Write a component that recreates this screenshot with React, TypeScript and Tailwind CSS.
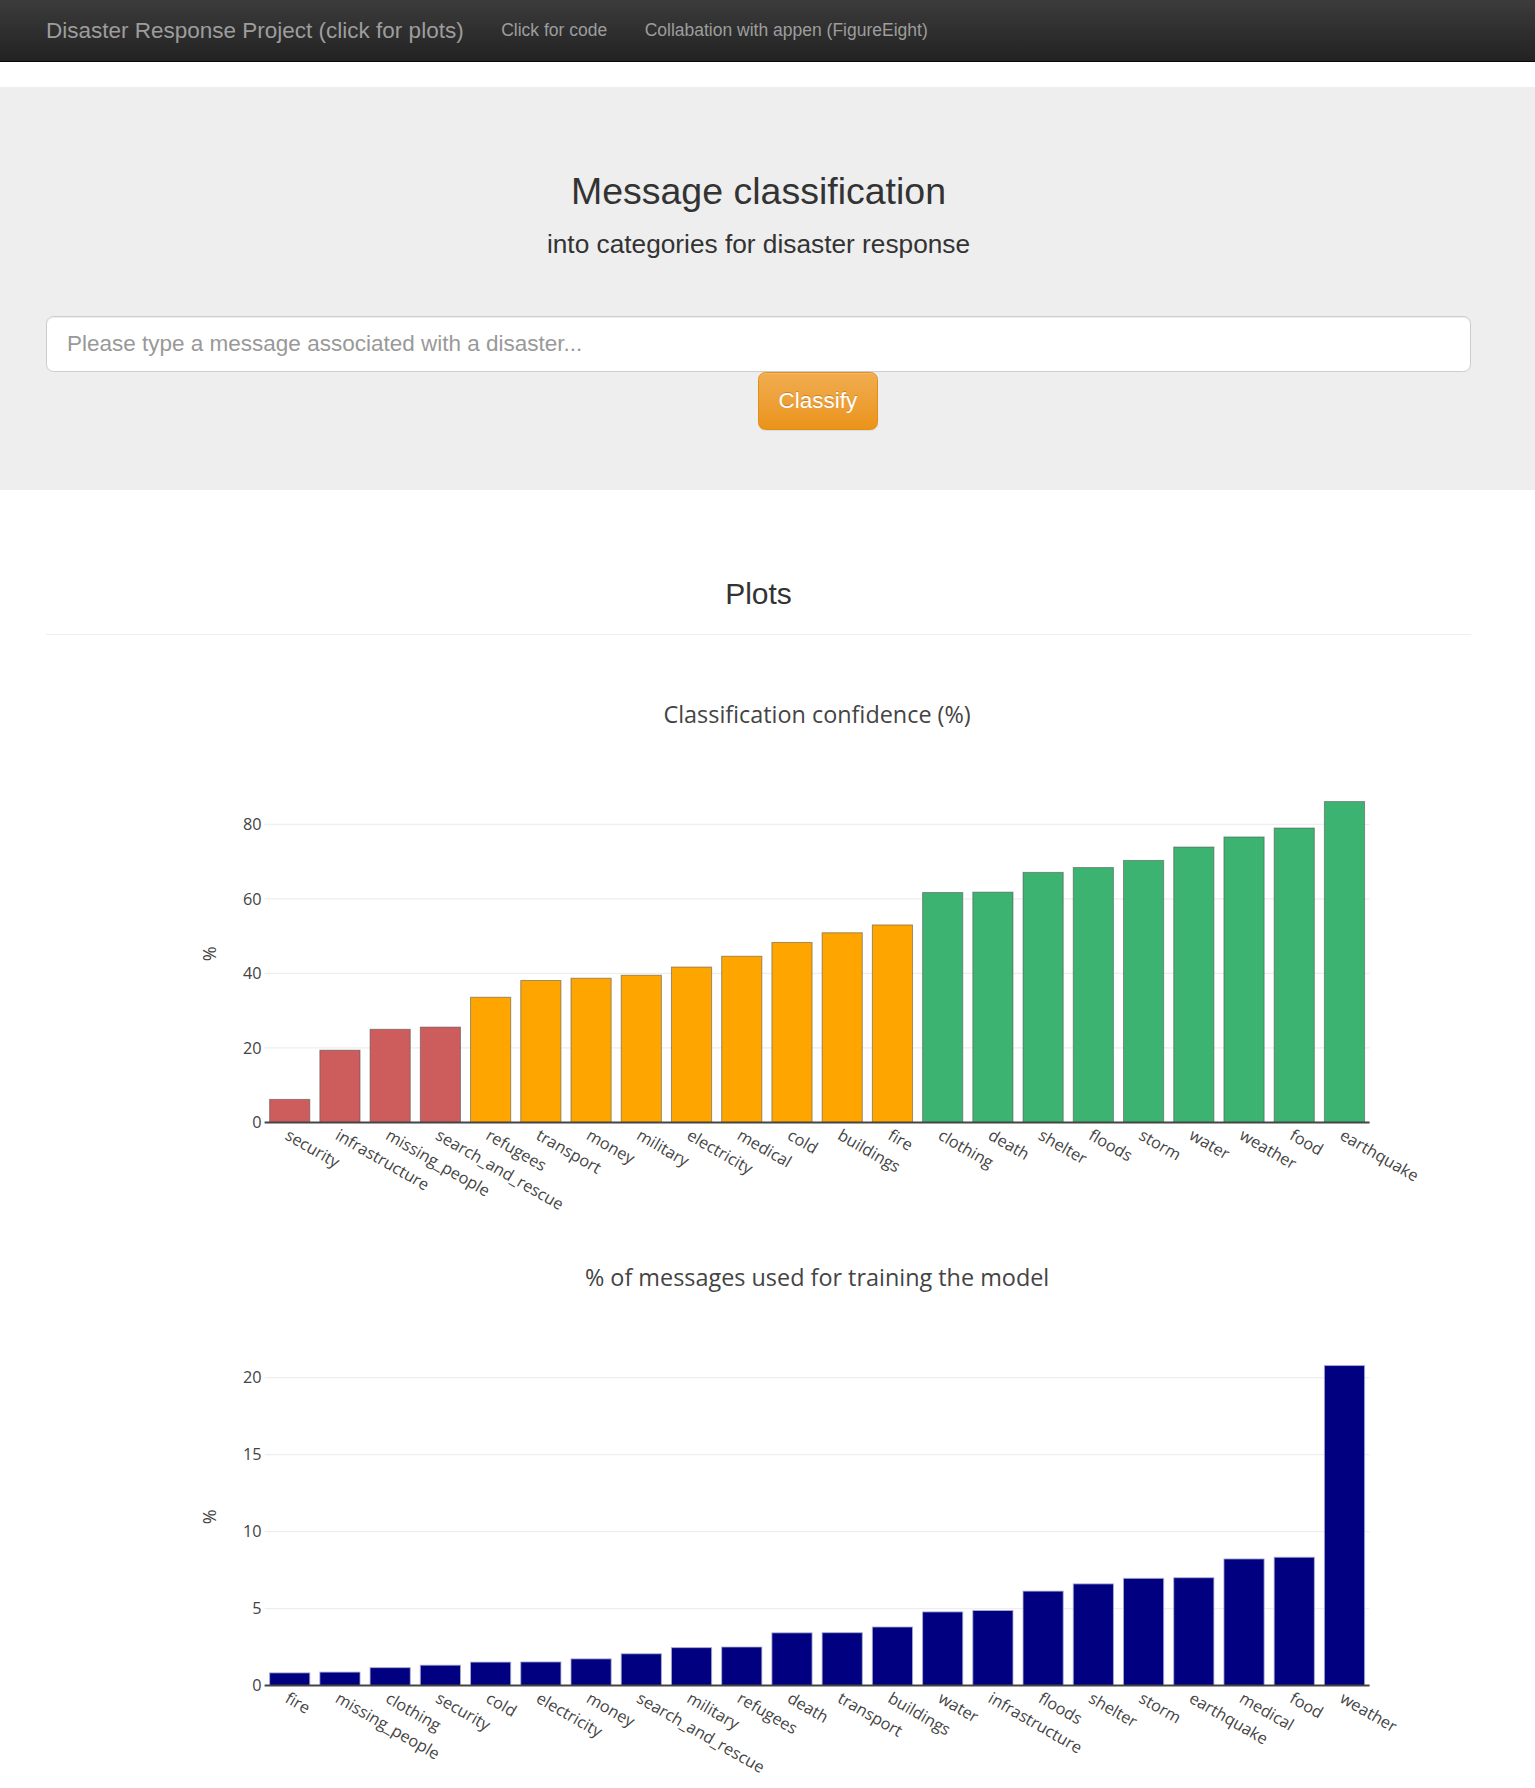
import React from "react";

type Bar = { label: string; value: number; color: string };

const confidence: [string, number][] = [
  ["security", 6.2],
  ["infrastructure", 19.4],
  ["missing_people", 25.0],
  ["search_and_rescue", 25.6],
  ["refugees", 33.6],
  ["transport", 38.1],
  ["money", 38.7],
  ["military", 39.5],
  ["electricity", 41.7],
  ["medical", 44.6],
  ["cold", 48.3],
  ["buildings", 50.9],
  ["fire", 53.0],
  ["clothing", 61.7],
  ["death", 61.8],
  ["shelter", 67.1],
  ["floods", 68.4],
  ["storm", 70.3],
  ["water", 73.9],
  ["weather", 76.6],
  ["food", 79.0],
  ["earthquake", 86.1],
];

const training: [string, number][] = [
  ["fire", 0.82],
  ["missing_people", 0.87],
  ["clothing", 1.16],
  ["security", 1.32],
  ["cold", 1.52],
  ["electricity", 1.53],
  ["money", 1.73],
  ["search_and_rescue", 2.06],
  ["military", 2.46],
  ["refugees", 2.5],
  ["death", 3.42],
  ["transport", 3.43],
  ["buildings", 3.8],
  ["water", 4.78],
  ["infrastructure", 4.87],
  ["floods", 6.13],
  ["shelter", 6.6],
  ["storm", 6.96],
  ["earthquake", 7.0],
  ["medical", 8.22],
  ["food", 8.33],
  ["weather", 20.78],
];

function confColor(v: number) {
  if (v < 30) return "#cd5c5c";
  if (v < 60) return "#ffa500";
  return "#3cb371";
}

const W = 1425;
const H = 562.5;
const PL = 218.6;
const PW = 1105;
const PT = 125;
const PH = 337.5;

function BarChart({
  title,
  bars,
  range,
  ticks,
  stroke,
}: {
  title: string;
  bars: Bar[];
  range: number;
  ticks: number[];
  stroke: string;
}) {
  const band = PW / bars.length;
  const y = (v: number) => PT + PH - (v / range) * PH;
  const font = "'Open Sans', 'DejaVu Sans', sans-serif";

  return (
    <svg width={W} height={H} className="block" style={{ fontFamily: font }}>
      <text x={PL + PW / 2} y={55} textAnchor="middle" dy="0.35em" fontSize={23.4} fill="#444">
        {title}
      </text>

      {/* grid */}
      {ticks.map((t) => (
        <g key={t}>
          {t > 0 && <line x1={PL} x2={PL + PW} y1={y(t)} y2={y(t)} stroke="#eee" strokeWidth={1.25} />}
          <text x={PL - 3} y={y(t)} dy="0.35em" textAnchor="end" fontSize={16.3} fill="#444">
            {t}
          </text>
        </g>
      ))}

      <text
        transform={`translate(164, ${PT + PH / 2}) rotate(-90)`}
        textAnchor="middle"
        dy="0.35em"
        fontSize={18}
        fill="#444"
      >
        %
      </text>

      {/* bars */}
      {bars.map((b, i) => {
        const x = PL + i * band + band * 0.1;
        const top = y(b.value);
        return (
          <rect
            key={b.label}
            x={x}
            y={top}
            width={band * 0.8}
            height={PT + PH - top}
            fill={b.color}
            stroke={stroke}
            strokeWidth={1}
          />
        );
      })}

      <line x1={PL} x2={PL + PW} y1={PT + PH} y2={PT + PH} stroke="#444" strokeWidth={2} />

      {/* x labels */}
      {bars.map((b, i) => {
        const cx = PL + i * band + band / 2;
        return (
          <text
            key={b.label}
            transform={`translate(${cx}, ${PT + PH + 6}) rotate(30)`}
            dy="0.71em"
            fontSize={16.3}
            fill="#444"
          >
            {b.label}
          </text>
        );
      })}
    </svg>
  );
}

export default function App() {
  const sans = { fontFamily: "'Liberation Sans', Arial, sans-serif" };

  return (
    <div className="min-h-screen bg-white text-[#333]" style={sans}>
      {/* Navbar */}
      <nav className="flex h-[62px] items-center border-b border-[#080808] bg-gradient-to-b from-[#3c3c3c] to-[#222] pl-[46px]">
        <a className="pr-[18.75px] text-[22.5px] text-[#9d9d9d]">Disaster Response Project (click for plots)</a>
        <a className="px-[18.75px] text-[17.5px] text-[#9d9d9d]">Click for code</a>
        <a className="px-[18.75px] text-[17.5px] text-[#9d9d9d]">Collabation with appen (FigureEight)</a>
      </nav>

      {/* Jumbotron */}
      <div className="mt-[25px] h-[403px] bg-[#eee] pt-[84px]">
        <div className="ml-[46px] w-[1425px]">
          <h1 className="text-center text-[37.5px] leading-[41px] text-[#333]">Message classification</h1>
          <p className="mt-[14px] text-center text-[26.25px] leading-[36px] text-[#333]">
            into categories for disaster response
          </p>
          <input
            type="text"
            placeholder="Please type a message associated with a disaster..."
            className="mt-[54px] h-[56px] w-full rounded-[7.5px] border border-[#ccc] bg-white px-[20px] text-[22.5px] text-[#555] shadow-[inset_0_1px_1px_rgba(0,0,0,0.075)] placeholder:text-[#999] focus:outline-none"
          />
          <div className="pl-[712px]">
            <button className="h-[58px] w-[120px] rounded-[7.5px] border border-[#e38d13] bg-gradient-to-b from-[#f0ad4e] to-[#eb9316] text-[22.5px] text-white shadow-[inset_0_1px_0_rgba(255,255,255,0.15),0_1px_1px_rgba(0,0,0,0.075)] [text-shadow:0_-1px_0_rgba(0,0,0,0.2)]">
              Classify
            </button>
          </div>
        </div>
      </div>

      {/* Plots */}
      <div className="ml-[46px] w-[1425px]">
        <h2 className="mt-[87px] text-center text-[30px] leading-[33px] text-[#333]">Plots</h2>
        <div className="mt-[24px] border-b border-[#eee]" />
        <div className="mt-[25px]">
          <BarChart
            title="Classification confidence (%)"
            bars={confidence.map(([label, value]) => ({ label, value, color: confColor(value) }))}
            range={90.54}
            ticks={[0, 20, 40, 60, 80]}
            stroke="rgba(80,80,80,0.55)"
          />
          <BarChart
            title="% of messages used for training the model"
            bars={training.map(([label, value]) => ({ label, value, color: "#000080" }))}
            range={21.92}
            ticks={[0, 5, 10, 15, 20]}
            stroke="rgba(170,175,205,0.8)"
          />
        </div>
      </div>
    </div>
  );
}
